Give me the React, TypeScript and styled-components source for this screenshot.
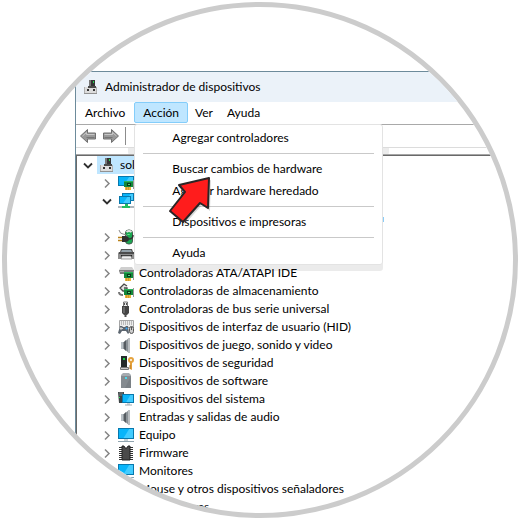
import React from "react";
import styled, { createGlobalStyle } from "styled-components";

const GlobalStyle = createGlobalStyle`
  *, *::before, *::after { box-sizing: border-box; }
  body {
    margin: 0;
    background: #fff;
    color: #000;
    font-family: Lato, "Open Sans", sans-serif;
    font-size: 12px;
    line-height: 18px;
  }
  button { font: inherit; color: inherit; background: none; border: 0; padding: 0; }
`;

const Lens = styled.main`
  width: calc(100vmin - 4px);
  aspect-ratio: 1;
  margin: 2px;
  padding: 64px 0 0 68px;
  border: 5px solid #ccc;
  border-radius: 50%;
  overflow: hidden;
`;

const Window = styled.section`
  display: flex;
  flex-direction: column;
  height: 100%;
  border: solid #6d8b9b;
  border-width: 1px 0 0 1px;

  > * { flex-shrink: 0; }
`;

const TitleBar = styled.header`
  display: flex;
  align-items: center;
  gap: 6px;
  height: 30px;
  padding-left: 7px;
  background: #ebf2f9;
`;

const Title = styled.h1`
  margin: 0;
  font-size: 12px;
  font-weight: 400;
`;

const MenuBar = styled.nav`
  display: flex;
  height: 23px;
  border-bottom: 1px solid #a9a9a9;
`;

const MenuSlot = styled.div`
  position: relative;
`;

const MenuButton = styled.button<{ $open?: boolean; $tight?: boolean }>`
  height: 21px;
  padding: 0 ${(p) => (p.$tight ? 6 : 8)}px;
  line-height: 19px;
  border: 1px solid ${(p) => (p.$open ? "#84cdfa" : "transparent")};
  border-radius: 2px;
  background: ${(p) => (p.$open ? "#bfe6ff" : "transparent")};
`;

const Dropdown = styled.div`
  position: absolute;
  z-index: 2;
  top: 22px;
  left: 0;
  width: 249px;
  padding: 2px 0 0;
  background: #fff;
  border: 1px solid #e3e3e3;
  border-radius: 3px;
  box-shadow: 0 6px 0 rgba(0, 0, 0, 0.08);
`;

const MenuItem = styled.button`
  display: block;
  width: 100%;
  height: 22px;
  padding-left: 37px;
  text-align: left;
`;

const Divider = styled.hr`
  height: 1px;
  margin: 4px 8px;
  border: 0;
  background: #c9c9c9;
`;

const Pointer = styled.svg`
  position: absolute;
  top: 50px;
  left: 32px;
  pointer-events: none;
`;

const Toolbar = styled.div`
  display: flex;
  align-items: center;
  gap: 5px;
  height: 23px;
  padding-left: 3px;
  border-bottom: 1px solid #dcdcdc;
`;

const ToolButton = styled.button`
  display: flex;
  width: 18px;
  height: 16px;
`;

const ToolSeparator = styled.span`
  width: 1px;
  height: 18px;
  background: #8c8c8c;
`;

const ToolTray = styled.div`
  width: 261px;
  height: 7px;
  margin-left: 52px;
  border-radius: 0 0 3px 3px;
  background: #ececec;
`;

const Tree = styled.ul`
  flex: 1;
  margin: 0;
  padding: 0;
  list-style: none;
  border: solid #696969;
  border-width: 1px 0 0 1px;
  box-shadow: 0 -1px 0 #a6a6a6;
`;

const Row = styled.li<{ $level: number }>`
  display: flex;
  align-items: center;
  height: 18px;
  padding-left: ${(p) => (p.$level ? 23 : 4)}px;
  gap: ${(p) => (p.$level ? 4 : 2)}px;
  white-space: nowrap;
`;

const Toggle = styled.button`
  display: flex;
  width: 14px;
  height: 14px;
`;

const Entry = styled.span<{ $selected?: boolean }>`
  display: flex;
  align-items: center;
  gap: 5px;
  height: 18px;
  padding: 0 ${(p) => (p.$selected ? 2 : 0)}px;
  background: ${(p) => (p.$selected ? "#bfe6ff" : "transparent")};
`;

const FocusMark = styled.span`
  width: 1px;
  height: 5px;
  margin-left: 283px;
  background: #8acdf8;
`;

const Glyph = ({ children }: { children: React.ReactNode }) => (
  <svg width="16" height="16" viewBox="0 0 16 16" aria-hidden="true">
    {children}
  </svg>
);

const Chevron = ({ open }: { open?: boolean }) => (
  <svg width="14" height="14" viewBox="0 0 14 14" fill="none" aria-hidden="true">
    {open ? (
      <path d="M3 5.5 7 9.5 11 5.5" stroke="#303030" strokeWidth="1.8" />
    ) : (
      <path d="M5 3.5 9 7.5 5 11.5" stroke="#858585" strokeWidth="1.5" />
    )}
  </svg>
);

const Card = ({ y = 6 }: { y?: number }) => (
  <g>
    <path d={`M6 ${y}h9v6H6z`} fill="#12883a" />
    <path d={`M6 ${y}h9v1H6z`} fill="#2cb45c" />
    <path d={`M9 ${y + 2}h4v3H9z`} fill="#06391c" />
    <path d={`M10 ${y + 3}h2v1h-2z`} fill="#58da75" />
    <path d={`M7 ${y + 6}h6v3H7z`} fill="#eab53c" />
    <path d={`M8.500 ${y + 6}v3M10.500 ${y + 6}v3`} stroke="#b98527" strokeWidth=".6" />
    <path d={`M15.500 ${y - 1}v9`} stroke="#999" />
  </g>
);

const Screen = ({ x, y, w, h }: { x: number; y: number; w: number; h: number }) => (
  <g>
    <rect x={x + 0.5} y={y + 0.5} width={w - 1} height={h - 1} fill="#08b5fa" stroke="#0878ad" />
    <path d={`M${x + w * 0.7} ${y + 1}H${x + w - 1}V${y + h - 1}H${x + w * 0.35}z`} fill="#42ccff" />
  </g>
);

const icons: Record<string, React.ReactNode> = {
  root: (
    <>
      <path d="M6 1h6v8H6z" fill="#353535" />
      <path d="M6 1h2v6H6z" fill="#777" />
      <path d="M10 2h1v2h-1z" fill="#22d34d" />
      <path d="M5 7h8v2H5z" fill="#4a4a4a" />
      <path d="M1 8h4v1h8V8h1v7H1z" fill="#dcdcdc" />
      <path d="M1 14.500h13" stroke="#929292" />
      <path d="M1.500 8v6M13.500 8v6" stroke="#b0b0b0" />
      <path d="M4 10h2v2H4zM10 10h2v2h-2z" fill="#333" />
    </>
  ),
  display: <><Screen x={0} y={1} w={16} h={10} /><Card y={6} /></>,
  network: (
    <>
      <Screen x={4} y={0} w={12} h={8} />
      <Screen x={1} y={3} w={12} h={8} />
      <path d="M7 11h3v2h2v2H4v-2h3z" fill="#20bd60" />
      <path d="M0 14h4M12 14h4" stroke="#aeb7bd" strokeWidth="2" />
    </>
  ),
  battery: (
    <>
      <rect x="7.500" y="1" width="7" height="14" rx="3" fill="#19a850" stroke="#4b5a50" />
      <path d="M8.500 3q2.500-2 5 0" stroke="#e3e3e3" strokeWidth="2" fill="none" />
      <path d="M9.500 6q1-2 2 0" stroke="#8df0a9" fill="none" />
      <path d="M1 1q1 4 4 4q4 0 4 3" fill="none" stroke="#888" />
      <path d="M0 8.500h4M0 11.500h4" stroke="#b98118" strokeWidth="1.500" />
      <path d="M4 7h3q4 0 4 3t-4 3H4z" fill="#303030" />
      <path d="M11 10q4 0 4-4" fill="none" stroke="#333" strokeWidth="1.500" />
    </>
  ),
  printer: (
    <>
      <path d="M3 2h11l1 3H2z" fill="#555" />
      <path d="M4 3h9l1 2H3z" fill="#93a0a8" />
      <path d="M1 5h15v7H0V6z" fill="#8d8d8d" />
      <path d="M1 5h15v2H1z" fill="#4c4c4c" />
      <path d="M3 8h11v2H3z" fill="#252525" />
      <path d="M4 9h9l1 3H3z" fill="#eee" stroke="#777" strokeWidth=".7" />
    </>
  ),
  ata: (
    <>
      <path d="M1 5 3 2h11l2 3v2H1z" fill="#cfcfcf" />
      <path d="M1 5h15v4H2z" fill="#7c7c7c" />
      <path d="M2 6h4v1H2z" fill="#aaa" />
      <Card y={7} />
    </>
  ),
  storage: (
    <>
      <path d="M9 3 6 1 2 5l3 3h4V5H6" fill="#e2e2e2" stroke="#4a4a4a" strokeWidth="1.300" />
      <path d="M1 9q0 3 4 3" fill="none" stroke="#777" strokeWidth="2" />
      <Card y={6} />
    </>
  ),
  usb: (
    <>
      <path d="M5.500 1h4v5h-4z" fill="#eee" stroke="#777" />
      <path d="M6 2h1v2H6zM8 2h1v2H8z" fill="#555" />
      <path d="M4 5h7v7l-2 2H6l-2-2z" fill="#444" />
      <path d="M5 6h2v6H5z" fill="#686868" />
      <path d="M7.500 13v3" stroke="#505050" strokeWidth="2" />
    </>
  ),
  hid: (
    <>
      <path d="M1.500 1.500h14v7h-14z" fill="#ececec" stroke="#a5a5a5" />
      <path d="M3 3h11M3 5h11" stroke="#888" strokeDasharray="1 1" />
      <path d="M2 7h2l1 1h2l1-1h2l1 7-1 1-2-3H4l-2 3-2-1z" fill="#5d6670" />
      <path d="M3 8v3M2 9.500h3" stroke="#ccc" />
      <circle cx="8.500" cy="9.500" r="1" fill="#30aaff" />
      <rect x="11.500" y="7.500" width="4" height="7" rx="2" fill="#ccc" stroke="#555" />
      <path d="M13.500 8v3" stroke="#555" />
    </>
  ),
  speaker: (
    <>
      <path d="M3 5h4v7H3z" fill="#8b9297" />
      <path d="M3 5h2v7H3z" fill="#b9c0c5" />
      <path d="m6 5 5-4v15l-5-4z" fill="#8a9196" />
      <path d="M6 5 8 3v11l-2-2z" fill="#565c61" />
      <path d="M11 1v15" stroke="#b9bdc0" strokeWidth="2" />
    </>
  ),
  security: (
    <>
      <path d="M3 1h6v12H3z" fill="#262b2b" />
      <path d="M5 3h2v2H5z" fill="#16d33f" />
      <path d="M2.500 12.500h8v2h-8z" fill="#ccc" stroke="#777" />
      <circle cx="13" cy="5" r="2" fill="none" stroke="#e5a33e" strokeWidth="2" />
      <path d="M12 7h2v8l-2-1z" fill="#e3a03b" />
      <path d="M11 11h2M11 13h2" stroke="#b67925" />
    </>
  ),
  software: (
    <>
      <path d="M3 2 5 0h6l2 2v13H3z" fill="#a5abb0" />
      <path d="M3 3h10v12H3z" fill="#858b90" />
      <path d="m13 3-6 12h6z" fill="#7a8085" />
      <path d="M7 4h2v2H7z" fill="#4dd9eb" />
    </>
  ),
  system: (
    <>
      <path d="M0 1h6v11H1z" fill="#3e4547" />
      <path d="M1 2h4M1 4h4" stroke="#7c8487" />
      <path d="M1 6h1v1H1z" fill="#2bea56" />
      <Screen x={4} y={3} w={12} h={9} />
      <path d="M9 13h3M7 14h7" stroke="#9faab1" />
    </>
  ),
  computer: <><Screen x={0} y={1} w={16} h={11} /><path d="M6 13h4M0 14.500h16" stroke="#91a5b0" /></>,
  firmware: (
    <>
      <path d="M2.500 2v13M13.500 2v13" stroke="#333" strokeWidth="3" strokeDasharray="1 1" />
      <path d="M4 1h2l1 2h2l1-2h2v14H4z" fill="#4a4a4a" stroke="#222" />
    </>
  ),
  mouse: <path d="M5 2q6-3 7 3v6q-4 6-8 0V5z" fill="#999" />,
};

const devices: { icon?: string; label?: string; open?: boolean }[] = [
  { icon: "display" },
  { icon: "network", open: true },
  {},
  { icon: "battery" },
  { icon: "printer" },
  { icon: "ata", label: "Controladoras ATA/ATAPI IDE" },
  { icon: "storage", label: "Controladoras de almacenamiento" },
  { icon: "usb", label: "Controladoras de bus serie universal" },
  { icon: "hid", label: "Dispositivos de interfaz de usuario (HID)" },
  { icon: "speaker", label: "Dispositivos de juego, sonido y video" },
  { icon: "security", label: "Dispositivos de seguridad" },
  { icon: "software", label: "Dispositivos de software" },
  { icon: "system", label: "Dispositivos del sistema" },
  { icon: "speaker", label: "Entradas y salidas de audio" },
  { icon: "computer", label: "Equipo" },
  { icon: "firmware", label: "Firmware" },
  { icon: "computer", label: "Monitores" },
  { icon: "mouse", label: "Mouse y otros dispositivos señaladores" },
  { icon: "computer", label: "Procesadores" },
];

const ToolArrow = ({ forward }: { forward?: boolean }) => (
  <svg width="18" height="16" viewBox="0 0 18 16" aria-hidden="true">
    <g transform={forward ? "matrix(-1 0 0 1 18 0)" : undefined}>
      <path d="M1.500 8 8.500 1.500v3.500h8v6h-8v3.500z" fill="#999" stroke="#707070" strokeLinejoin="round" />
      <path d="M3.500 8 7.500 4.500V6.500h8" fill="none" stroke="#c8c8c8" />
      <path d="M7.500 9.500h8" stroke="#777" />
    </g>
  </svg>
);

export default function App() {
  return (
    <>
      <GlobalStyle />
      <Lens>
        <Window>
          <TitleBar>
            <Glyph>{icons.root}</Glyph>
            <Title>Administrador de dispositivos</Title>
          </TitleBar>
          <MenuBar>
            <MenuButton>Archivo</MenuButton>
            <MenuSlot>
              <MenuButton $open aria-expanded="true" aria-haspopup="menu">Acción</MenuButton>
              <Dropdown role="menu">
                <MenuItem role="menuitem">Agregar controladores</MenuItem>
                <Divider />
                <MenuItem role="menuitem">Buscar cambios de hardware</MenuItem>
                <MenuItem role="menuitem">Agregar hardware heredado</MenuItem>
                <Divider />
                <MenuItem role="menuitem">Dispositivos e impresoras</MenuItem>
                <Divider />
                <MenuItem role="menuitem">Ayuda</MenuItem>
                <Pointer width="46" height="50" viewBox="0 0 46 50" aria-hidden="true">
                  <path d="m44 5-29 8 6 7L5 38l13 11 17-19 8 6z" fill="#000" opacity=".15" />
                  <path
                    d="M42 3 12 10l6 7L3 36l13 11 17-19 8 5z"
                    fill="#ff1c1c"
                    stroke="#2b2526"
                    strokeWidth="2"
                    strokeLinejoin="round"
                  />
                </Pointer>
              </Dropdown>
            </MenuSlot>
            <MenuButton $tight>Ver</MenuButton>
            <MenuButton $tight>Ayuda</MenuButton>
          </MenuBar>
          <Toolbar>
            <ToolButton aria-label="Atrás"><ToolArrow /></ToolButton>
            <ToolButton aria-label="Adelante"><ToolArrow forward /></ToolButton>
            <ToolSeparator />
          </Toolbar>
          <ToolTray />
          <Tree>
            <Row $level={0}>
              <Toggle aria-label="Contraer"><Chevron open /></Toggle>
              <Entry $selected>
                <Glyph>{icons.root}</Glyph>
                <span>solvetic</span>
              </Entry>
            </Row>
            {devices.map((d, i) => (
              <Row key={i} $level={1}>
                {d.icon ? (
                  <>
                    <Toggle aria-label={d.open ? "Contraer" : "Expandir"}><Chevron open={d.open} /></Toggle>
                    <Entry>
                      <Glyph>{icons[d.icon]}</Glyph>
                      {d.label && <span>{d.label}</span>}
                    </Entry>
                  </>
                ) : (
                  <FocusMark />
                )}
              </Row>
            ))}
          </Tree>
        </Window>
      </Lens>
    </>
  );
}
